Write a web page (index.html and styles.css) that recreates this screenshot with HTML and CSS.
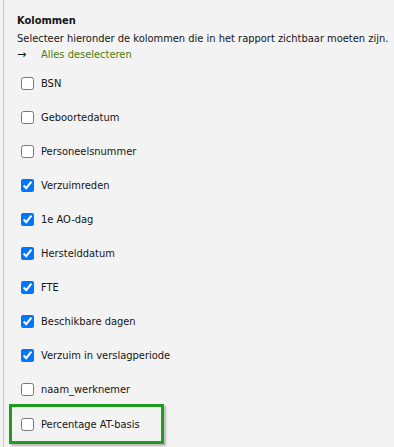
FILE: index.html
```html
<!DOCTYPE html>
<html lang="nl">
<head>
  <meta charset="UTF-8">
  <meta name="viewport" content="width=device-width, initial-scale=1.0">
  <title>Kolommen</title>
  <link rel="stylesheet" href="styles.css">
</head>
<body>
  <div class="panel">
    <h3 class="title">Kolommen</h3>
    <p class="intro">Selecteer hieronder de kolommen die in het rapport zichtbaar moeten zijn.</p>
    <p class="toggle"><span class="arrow">&rarr;</span><a href="#" class="toggle-link">Alles deselecteren</a></p>
    <ul class="column-list">
      <li class="column"><label><input type="checkbox"> BSN</label></li>
      <li class="column"><label><input type="checkbox"> Geboortedatum</label></li>
      <li class="column"><label><input type="checkbox"> Personeelsnummer</label></li>
      <li class="column"><label><input type="checkbox" checked> Verzuimreden</label></li>
      <li class="column"><label><input type="checkbox" checked> 1e AO-dag</label></li>
      <li class="column"><label><input type="checkbox" checked> Herstelddatum</label></li>
      <li class="column"><label><input type="checkbox" checked> FTE</label></li>
      <li class="column"><label><input type="checkbox" checked> Beschikbare dagen</label></li>
      <li class="column"><label><input type="checkbox" checked> Verzuim in verslagperiode</label></li>
      <li class="column"><label><input type="checkbox"> naam_werknemer</label></li>
      <li class="column highlight"><label><input type="checkbox"> Percentage AT-basis</label></li>
    </ul>
  </div>
</body>
</html>
```

FILE: styles.css
```css
* {
  margin: 0;
  padding: 0;
  box-sizing: border-box;
}
body {
  font-family: "DejaVu Sans", sans-serif;
  font-stretch: condensed;
  font-size: 11px;
  color: #151515;
  background: #f3f3f3;
  height: 100vh;
  overflow: hidden;
}
.panel {
  margin-left: 3px;
  border-left: 1px solid #c9c9c9;
  padding: 14px 0 0 13px;
  height: 100%;
  white-space: nowrap;
}
.title {
  font-size: 11px;
  font-weight: bold;
  line-height: 14px;
  margin-bottom: 3px;
}
.intro {
  line-height: 16px;
}
.toggle {
  line-height: 16px;
}
.arrow {
  display: inline-block;
  width: 24px;
  font-stretch: normal;
}
.toggle-link {
  color: #4c7c10;
  text-decoration: none;
}
.column-list {
  list-style: none;
  margin-top: 3px;
}
.column {
  height: 34px;
  display: flex;
  align-items: center;
}
.column label {
  display: flex;
  align-items: center;
  gap: 4px;
}
.column input {
  margin: 0 3px 0 4px;
  width: 13px;
  height: 13px;
}
.highlight {
  margin-left: -8px;
  width: 155px;
  height: 40px;
  padding-left: 8px;
  border: 3px solid #1e9c1e;
  margin-top: -2px;
  box-shadow: 2px 2px 2px rgba(0, 0, 0, 0.25);
}
.highlight input {
  margin-left: 1px;
}
```
